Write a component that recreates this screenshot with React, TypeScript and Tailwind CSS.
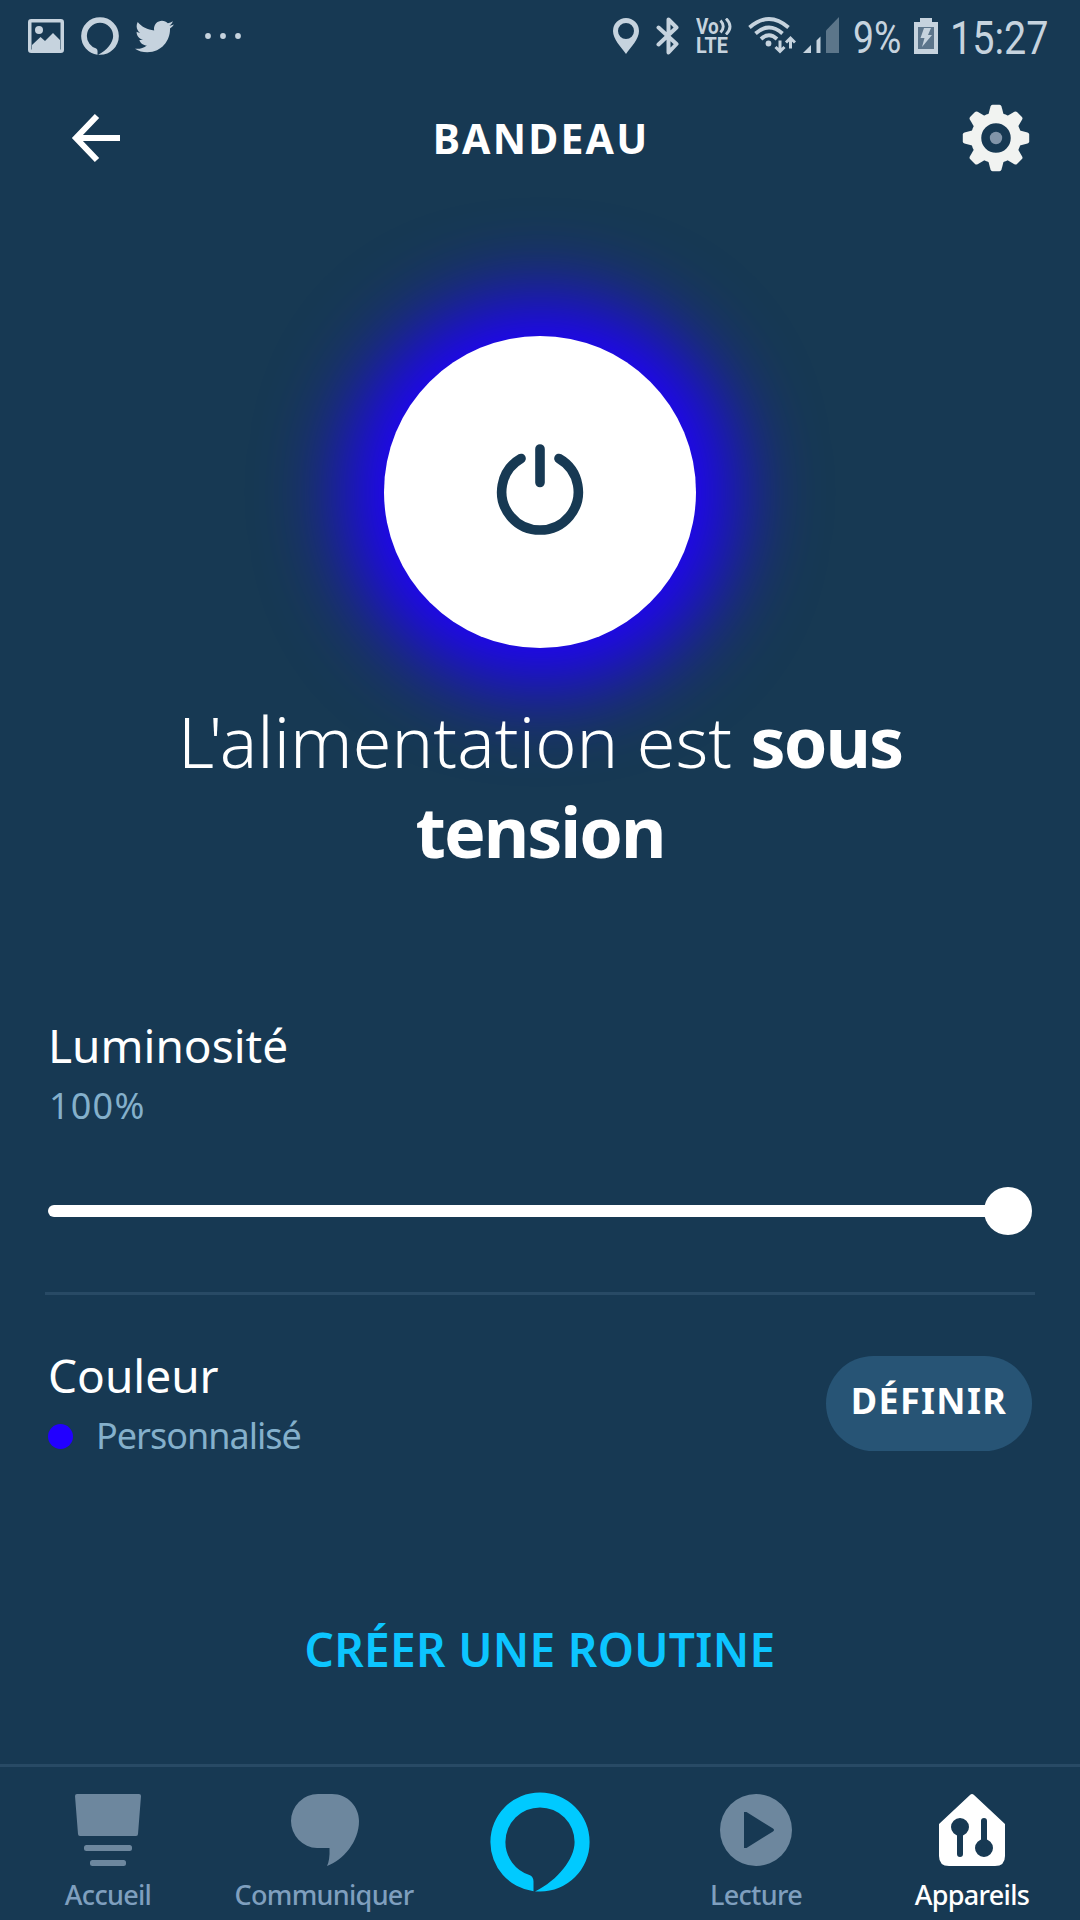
import { useState } from "react";
import { FaTwitter } from "react-icons/fa";

const TEETH = [0, 45, 90, 135, 180, 225, 270, 315];

function AlexaRing({ className }: { className?: string }) {
    return (
        <svg viewBox="0 0 100 100" className={className} fill="currentColor">
            <path d="M43.500 99.200A49.600 49.600 0 0 1 .4 50A49.600 49.600 0 0 1 50 .4A49.600 49.600 0 0 1 99.600 50A49.600 49.600 0 0 1 50 99.600H45C68 88 84.600 67 84.600 50A34.600 34.600 0 0 0 50 15.400A34.600 34.600 0 0 0 15.400 50A34.600 34.600 0 0 0 40 83.200Q43.500 85 43.500 89.500Z" />
        </svg>
    );
}

function StatusBar() {
    return (
        <div className="flex h-18 items-start justify-between pl-7 pr-8 pt-[17px] text-[#c6d3de]">
            <div className="flex items-start">
                <svg className="mt-0.5 h-[34px] w-9" viewBox="0 0 36 34">
                    <rect x="1.75" y="1.75" width="32.5" height="30.5" rx="1.5" fill="none" stroke="currentColor" strokeWidth="3.5" />
                    <circle cx="11" cy="11" r="4" fill="currentColor" />
                    <path d="M4 26L12.500 18L17 22L25 14L32 21V31H4Z" fill="currentColor" />
                </svg>
                <AlexaRing className="ml-[17px] size-[38px]" />
                <FaTwitter className="ml-4 size-[39px]" />
                <svg className="ml-[31px] mt-4 h-[6px] w-9" viewBox="0 0 36 6" fill="currentColor">
                    <circle cx="3" cy="3" r="2.900" />
                    <circle cx="18" cy="3" r="2.900" />
                    <circle cx="33" cy="3" r="2.900" />
                </svg>
            </div>
            <div className="flex items-start">
                <svg className="mt-px h-9 w-[26px]" viewBox="0 0 26 36">
                    <path fillRule="evenodd" fill="currentColor" d="M13 0A13 13 0 0 1 26 13C26 21 18 29 13 36C8 29 0 21 0 13A13 13 0 0 1 13 0ZM13 5A8 8 0 1 0 13 21A8 8 0 1 0 13 5Z" />
                </svg>
                <svg className="ml-[17px] h-[38px] w-[23px]" viewBox="0 0 23 38" fill="none" stroke="currentColor" strokeWidth="4" strokeLinejoin="round" strokeLinecap="round">
                    <path d="M2.500 10.500L20.500 27L12.500 35.500V2.500L20.500 10.500L2.500 27.500" />
                </svg>
                <div className="ml-[17px] h-[38px] w-[38px] font-[Roboto] text-[22px] font-bold">
                    <div className="flex h-[19px] items-start">
                        <span className="block w-[23px] origin-left scale-x-[0.86] leading-[19px]">Vo</span>
                        <svg className="mt-px h-[17px] w-[14px] shrink-0" viewBox="0 0 14 17" fill="none" stroke="currentColor" strokeWidth="2.800">
                            <path d="M1.500 2.500Q7 8.500 1.500 14.500M7 0.500Q15 8.500 7 16.500" />
                        </svg>
                    </div>
                    <span className="block w-9 origin-left scale-x-[0.9] leading-5">LTE</span>
                </div>
                <svg className="ml-[14px] h-[38px] w-12" viewBox="0 0 48 38" fill="none" stroke="currentColor" strokeWidth="3.8">
                    <path d="M1.500 10.500Q21 -6.500 40.500 10.500M7.500 16.500Q21 4.500 34.500 16.500M13 22Q21 14.500 29 22" />
                    <circle cx="20.500" cy="26.500" r="2.900" fill="currentColor" stroke="none" />
                    <path d="M32 23.500V34M27.500 30L32 34.500L36.500 30M42.500 31.500V21M38 25.500L42.500 21L47 25.500" strokeWidth="3" />
                </svg>
                <svg className="ml-[7px] h-[37px] w-9" viewBox="0 0 36 37" fill="currentColor">
                    <path d="M0 36L8 28V36ZM13.500 23.500L17.500 19.500V36H13.500Z" />
                    <path d="M23 13.500L36 0V36H23Z" opacity="0.4" />
                </svg>
                <span className="ml-[14px] block w-[49px] origin-left scale-x-[0.83] whitespace-nowrap font-[Roboto] text-[45px] leading-[42px]">9%</span>
                <svg className="ml-3 mt-px h-9 w-6" viewBox="0 0 24 36">
                    <path d="M6 0H18V4H24V36H0V4H6Z" fill="currentColor" />
                    <path d="M4 9H20V31H4Z" fill="#5c758b" />
                    <path d="M10 10H17L14 17H18L8 29L10.500 20H6.500Z" fill="currentColor" />
                </svg>
                <span className="ml-3 block w-[98px] origin-left scale-x-[0.86] whitespace-nowrap font-[Roboto] text-[46px] leading-[42px]">15:27</span>
            </div>
        </div>
    );
}

function Header() {
    return (
        <header className="flex h-[132px] items-center justify-between pl-[71px] pr-[50px]">
            <svg className="h-[50px] w-[49px]" viewBox="0 0 49 50" fill="none" stroke="white" strokeWidth="6">
                <path d="M49 25H5M26 3L5 25L26 47" />
            </svg>
            <h1 className="text-[41px] font-bold leading-none tracking-[2.2px]">BANDEAU</h1>
            <svg className="size-[68px]" viewBox="-34 -34 68 68" fill="#f1f3f1">
                {TEETH.map((a) => (
                    <path key={a} d="M-8 -22L-5.500 -31.500Q-5 -33.200 -3.500 -33.200H3.500Q5 -33.200 5.500 -31.500L8 -22Z" transform={`rotate(${a})`} />
                ))}
                <circle r="20" fill="none" stroke="#f1f3f1" strokeWidth="10.500" />
                <circle r="6.200" fill="#8295a9" />
            </svg>
        </header>
    );
}

function PowerButton({ on, onClick }: { on: boolean; onClick: () => void }) {
    return (
        <button
            onClick={onClick}
            aria-pressed={on}
            className="mt-[132px] flex size-[312px] items-center justify-center rounded-full bg-white shadow-[0_0_84px_41px_#2000ff]"
        >
            <svg className="size-24" viewBox="-48 -48 96 96" fill="none" stroke="#173953" strokeWidth="9.600" strokeLinecap="round">
                <path d="M-19 -33.500A38.300 38.300 0 1 0 19 -33.500M0 -43V-9.500" />
            </svg>
        </button>
    );
}

function Tab({ label, active, children }: { label: string; active?: boolean; children: React.ReactNode }) {
    return (
        <div className={`flex w-[216px] flex-col items-center pt-[27px] ${active ? "text-white" : "text-[#6d879e]"}`}>
            <svg className="size-18" viewBox="0 0 72 72" fill="currentColor">
                {children}
            </svg>
            <span className={`mt-[13px] text-[27px] font-medium leading-8 tracking-[-0.7px] ${active ? "text-white" : "text-[#7f9fbe]"}`}>{label}</span>
        </div>
    );
}

export default function App() {
    const [on, setOn] = useState(true);
    const brightness = 100;

    return (
        <div className="flex h-[1920px] w-[1080px] flex-col overflow-hidden bg-[#173953] font-['Noto_Sans','Open_Sans',sans-serif] text-white">
            <StatusBar />
            <Header />
            <main className="flex flex-1 flex-col items-center">
                <PowerButton on={on} onClick={() => setOn(!on)} />
                <p className="z-10 mt-12 w-[760px] text-center text-[70px] font-light leading-[90px] tracking-[0.1px]">
                    L'alimentation est <b className="font-bold tracking-[-2px]">sous tension</b>
                </p>

                <section className="mt-[139px] w-full px-12">
                    <h2 className="text-[46px] leading-[60px]">Luminosité</h2>
                    <p className="mt-[7px] pl-px text-[36px] leading-12 tracking-[1.2px] text-[#84b0cb]">{brightness}%</p>
                    <div className="mt-[57px] flex h-12 items-center">
                        <div className="h-3 flex-1 rounded-l-full bg-white" />
                        <div className="-ml-1 size-12 rounded-full bg-white" />
                    </div>
                </section>

                <div className="mt-[57px] h-[3px] w-[990px] bg-[#284a65]" />

                <section className="mt-[50px] flex w-full items-start justify-between px-12">
                    <div>
                        <h2 className="text-[46px] leading-[60px]">Couleur</h2>
                        <div className="mt-[7px] flex items-center">
                            <span className="size-[25px] rounded-full bg-[#2200ff]" />
                            <span className="ml-[23px] text-[36px] leading-12 tracking-[-1px] text-[#84b0cb]">Personnalisé</span>
                        </div>
                    </div>
                    <button className="mt-[11px] flex h-[95px] w-[206px] items-center justify-center rounded-full bg-[#275475] pb-1.5 text-[36px] font-bold tracking-[1.3px]">
                        DÉFINIR
                    </button>
                </section>

                <button className="mt-[159px] text-[46px] font-semibold leading-[60px] tracking-[0.3px] text-[#0cc5ff]">CRÉER UNE ROUTINE</button>
            </main>

            <nav className="flex h-[156px] border-t-[3px] border-[#284a65]">
                <Tab label="Accueil">
                    <path d="M5 0H67Q69 0 69 2L66 40Q66 42 64 42H8Q6 42 6 40L3 2Q3 0 5 0Z" />
                    <rect x="12" y="51" width="48" height="6" rx="2.500" />
                    <rect x="18" y="66" width="36" height="6" rx="2.500" />
                </Tab>
                <Tab label="Communiquer">
                    <path d="M30 0H44C60 0 71 13 71 27C71 48 55 66 39 72Q42 66 41.500 54H29A27 27 0 0 1 3 27A27 27 0 0 1 30 0Z" />
                </Tab>
                <div className="flex w-[216px] justify-center pt-[25px]">
                    <AlexaRing className="size-[100px] text-[#00caff]" />
                </div>
                <Tab label="Lecture">
                    <path fillRule="evenodd" d="M36 0A36 36 0 1 1 36 72A36 36 0 1 1 36 0ZM24 18V54H26.500L53 37.500Q55 36 53 34.500L26.500 18Z" />
                </Tab>
                <Tab label="Appareils" active>
                    <path d="M34 1Q36 -1 38 1L69 30V62Q69 72 59 72H13Q3 72 3 62V30Z" />
                    <g fill="#173953" stroke="#173953" strokeWidth="6" strokeLinecap="round">
                        <circle cx="24" cy="33" r="6" />
                        <path d="M24 34V60M48 27V52" />
                        <circle cx="48" cy="54" r="6" />
                    </g>
                </Tab>
            </nav>
        </div>
    );
}
